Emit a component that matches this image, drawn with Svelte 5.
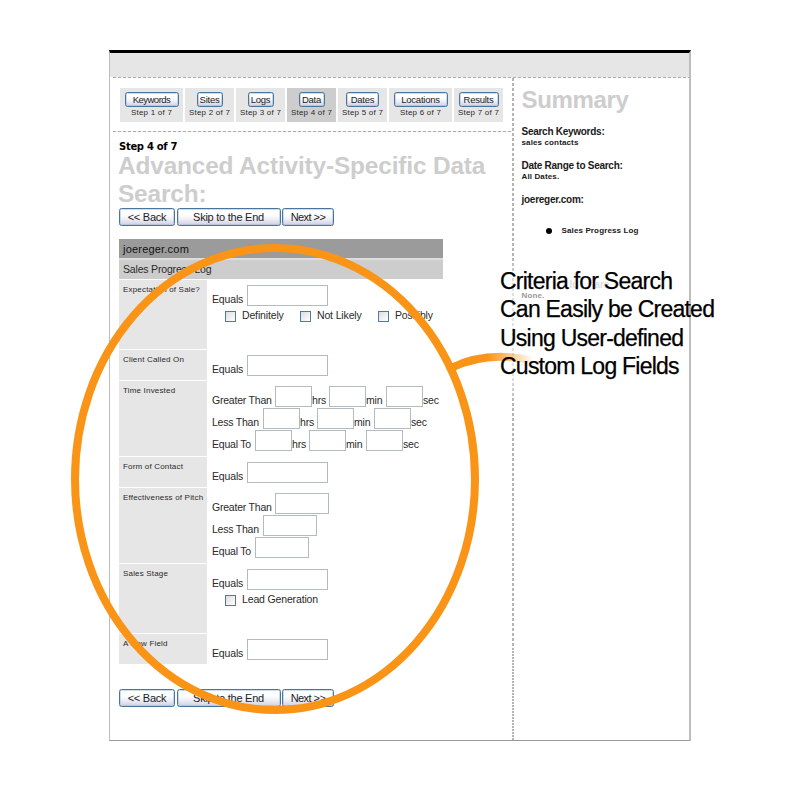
<script>
  const steps = [
    { name: 'Keywords', w: 63, b: 54 },
    { name: 'Sites', w: 49, b: 26 },
    { name: 'Logs', w: 49, b: 26 },
    { name: 'Data', w: 49, b: 26, active: true },
    { name: 'Dates', w: 49, b: 33 },
    { name: 'Locations', w: 63, b: 54 },
    { name: 'Results', w: 49, b: 40 }
  ];
  const ranges = ['Greater Than', 'Less Than', 'Equal To'];
  const rows = [
    { label: 'Expectation of Sale?', h: 69, type: 'text', options: ['Definitely', 'Not Likely', 'Possibly'] },
    { label: 'Client Called On', h: 30, type: 'text' },
    { label: 'Time Invested', h: 75, type: 'time' },
    { label: 'Form of Contact', h: 30, type: 'text' },
    { label: 'Effectiveness of Pitch', h: 75, type: 'range' },
    { label: 'Sales Stage', h: 69, type: 'text', options: ['Lead Generation'] },
    { label: 'A New Field', h: 30, type: 'text' }
  ];
</script>

{#snippet actions()}
  <div class="actions">
    <button class="back">&lt;&lt; Back</button>
    <button class="skip">Skip to the End</button>
    <button class="next">Next &gt;&gt;</button>
  </div>
{/snippet}

<div class="page">
  <div class="panel">
    <div class="bar"></div>
    <div class="hdash"></div>
    <div class="body">
      <main>
        <nav>
          {#each steps as step, i}
            <div class="step" class:active={step.active} style="width:{step.w}px">
              <button style="width:{step.b}px">{step.name}</button>
              <span>Step {i + 1} of 7</span>
            </div>
          {/each}
        </nav>
        <div class="hdash"></div>
        <div class="content">
          <div class="count">Step 4 of 7</div>
          <h1>Advanced Activity-Specific Data<br />Search:</h1>
          {@render actions()}
          <div class="table">
            <div class="site">joereger.com</div>
            <div class="log">Sales Progress Log</div>
            {#each rows as row}
              <div class="row" style="height:{row.h}px">
                <div class="label">{row.label}</div>
                <div class="fields">
                  {#if row.type === 'text'}
                    <div class="line"><span class="equals">Equals</span><input class="wide" /></div>
                    {#if row.options}
                      <div class="options">
                        {#each row.options as option}
                          <label><i></i><span>{option}</span></label>
                        {/each}
                      </div>
                    {/if}
                  {:else}
                    {#each ranges as range, i}
                      <div class="line">
                        <span class="range r{i}">{range}</span>
                        {#if row.type === 'time'}
                          <input class="unit" /><span class="hrs">hrs</span>
                          <input class="unit" /><span class="min">min</span>
                          <input class="unit" /><span>sec</span>
                        {:else}
                          <input class="medium" />
                        {/if}
                      </div>
                    {/each}
                  {/if}
                </div>
              </div>
            {/each}
          </div>
          {@render actions()}
        </div>
      </main>
      <div class="vdash"><div></div><div></div></div>
      <aside>
        <h2>Summary</h2>
        <h3>Search Keywords:</h3>
        <p>sales contacts</p>
        <h3>Date Range to Search:</h3>
        <p>All Dates.</p>
        <h3>joereger.com:</h3>
        <div class="bullet"><b></b><p>Sales Progress Log</p></div>
        <div class="faint"><span>lu</span><span>are</span></div>
        <p class="none">None.</p>
      </aside>
    </div>
  </div>

  <svg class="ring" width="800" height="800" viewBox="0 0 800 800">
    <defs>
      <linearGradient id="fade" gradientUnits="userSpaceOnUse" x1="450" y1="0" x2="534" y2="0">
        <stop offset="0" stop-color="#f99417" />
        <stop offset="0.45" stop-color="#f99417" />
        <stop offset="1" stop-color="#f99417" stop-opacity="0" />
      </linearGradient>
    </defs>
    <path d="M451 368Q488 350 534 361" fill="none" stroke="url(#fade)" stroke-width="8" />
    <ellipse cx="275" cy="479" rx="200" ry="231" fill="none" stroke="#f99417" stroke-width="8" />
  </svg>
  <div class="callout">
    <div>Criteria for Search</div>
    <div>Can Easily be Created</div>
    <div>Using User-defined</div>
    <div>Custom Log Fields</div>
  </div>
</div>

<style>
  :global(body) { background: #fff; }
  .page {
    position: relative; width: 800px; height: 800px; box-sizing: border-box; overflow: hidden;
    padding: 50px 0 0 109px; background: #fff; color: #2a2a2a;
    font-family: "Liberation Sans", Arial, sans-serif;
  }
  .page * { box-sizing: border-box; }
  .panel {
    width: 582px; height: 691px; display: flex; flex-direction: column;
    border: solid #bdbdbd; border-width: 3px 2px 1px; border-top-color: #000; border-bottom-color: #999;
    border-left-width: 1.5px;
  }
  .bar { height: 24px; background: #e6e6e6; flex: none; }
  .hdash { height: 1px; margin-left: 3px; flex: none; background: repeating-linear-gradient(90deg, #aaa 0 3px, #f2f2f2 3px 5px); }
  .body { display: flex; flex: 1; }
  main { width: 402px; }
  nav { display: flex; gap: 2px; padding: 10px 0 9px 10px; }
  .step {
    height: 34px; flex: none; background: #e6e6e6; padding-top: 4px;
    display: flex; flex-direction: column; align-items: center;
  }
  .step.active { background: #cdcdcd; }
  button {
    display: flex; align-items: center; justify-content: center; padding: 0; flex: none;
    border: 1px solid #4a769d; border-radius: 2.5px; color: #222; font-family: inherit; white-space: pre;
    background: linear-gradient(#fff 35%, #eeeef7 65%, #cfcfe2);
    box-shadow: inset 0 0 0 0.5px #9fb9d0;
  }
  .step button { height: 15px; font-size: 9.5px; letter-spacing: -0.5px; }
  .step:not(:first-child) button { letter-spacing: -0.25px; }
  .step span { font-size: 8px; line-height: 10px; margin-top: 1px; white-space: nowrap; letter-spacing: 0.22px; }
  .content { padding: 7px 0 0 9px; }
  .count { font: bold 10px/14px "DejaVu Sans", sans-serif; height: 13px; padding-top: 1px; letter-spacing: -0.3px; color: #000; }
  h1 { margin: 0 0 0 -1px; font-size: 24.4px; line-height: 28px; color: #cdcdcd; white-space: nowrap; letter-spacing: -0.15px; }
  .actions { display: flex; gap: 1.5px; }
  .actions button { height: 18px; font-size: 11px; letter-spacing: -0.25px; padding-bottom: 1px; }
  .back { width: 56px; }
  .skip { width: 104px; }
  .actions .next { width: 52px; letter-spacing: -0.55px; }
  .table { width: 324px; margin: 13px 0 25px; font-size: 11px; }
  .site { height: 19px; background: #9b9b9b; padding-left: 4px; line-height: 20px; letter-spacing: 0.2px; color: #111; }
  .log { height: 21px; border-top: 2px solid #ddd; background: #cdcdcd; padding-left: 4px; line-height: 19px; font-size: 10.5px; letter-spacing: -0.18px; margin-bottom: 1px; }
  .row { display: flex; margin-bottom: 1px; }
  .label { width: 88px; flex: none; background: #e6e6e6; padding: 5px 0 0 4px; font-size: 8px; line-height: 9px; white-space: nowrap; letter-spacing: 0.18px; }
  .fields { padding: 5px 0 0 5px; font-size: 10.5px; letter-spacing: -0.15px; white-space: nowrap; }
  .line { display: flex; height: 22px; line-height: 12px; }
  .line span { padding-top: 7.5px; flex: none; }
  .line .range { letter-spacing: -0.22px; }
  input { height: 21px; border: 1px solid #b2bcc0; padding: 0; background: #fff; flex: none; }
  .equals { width: 35px; }
  .wide { width: 81px; }
  .medium { width: 54px; }
  .unit { width: 37px; }
  .r0 { width: 63px; }
  .r1 { width: 51px; }
  .r2 { width: 43px; }
  .hrs { width: 17px; }
  .min { width: 20px; }
  .options { display: flex; padding: 4px 0 0 13px; }
  label { display: flex; height: 11px; gap: 6px; align-items: center; }
  label:nth-child(1) { width: 75px; }
  label:nth-child(2) { width: 78px; }
  label i { width: 11px; height: 11px; border: 1px solid #4f7ba3; background: linear-gradient(135deg, #ddd, #fff); flex: none; }
  label span { margin-top: -3px; line-height: 12px; }
  .vdash {
    width: 1.5px; display: flex; flex-direction: column;
    mask-image: linear-gradient(#000 180px, #0006 205px, #0006 300px, #000 325px);
  }
  .vdash div:first-child { height: 570px; background: repeating-linear-gradient(#b4b4b4 0 3px, #fff 3px 5px); }
  .vdash div:last-child { flex: 1; background: repeating-linear-gradient(#b4b4b4 0 2px, #fff 2px 3px); }
  aside { padding: 8px 0 0 8px; color: #1a1a1a; white-space: nowrap; }
  h2 { margin: 0; font-size: 24px; line-height: 28px; letter-spacing: -0.35px; color: #cdcdcd; }
  h3 { margin: 12px 0 0; font-size: 10px; line-height: 12px; letter-spacing: -0.27px; }
  aside p { margin: 0; font-weight: bold; font-size: 8px; line-height: 10px; letter-spacing: 0.13px; }
  .bullet { display: flex; align-items: center; gap: 10px; padding-left: 24px; margin-top: 20px; }
  .bullet b { width: 6px; height: 6px; border-radius: 50%; background: #000; }
  .faint { display: flex; gap: 16px; height: 12px; margin-top: 43px; padding-left: 48px; font: bold 10px/12px "Liberation Sans", sans-serif; color: #ddd; }
  aside .none { color: #999; }
  .ring { position: absolute; left: 0; top: 0; }
  .callout {
    position: absolute; left: 500px; top: 267px; font-size: 23px; line-height: 28.3px; color: #000;
    white-space: nowrap; letter-spacing: -0.76px; -webkit-text-stroke: 0.25px #000;
  }
</style>
